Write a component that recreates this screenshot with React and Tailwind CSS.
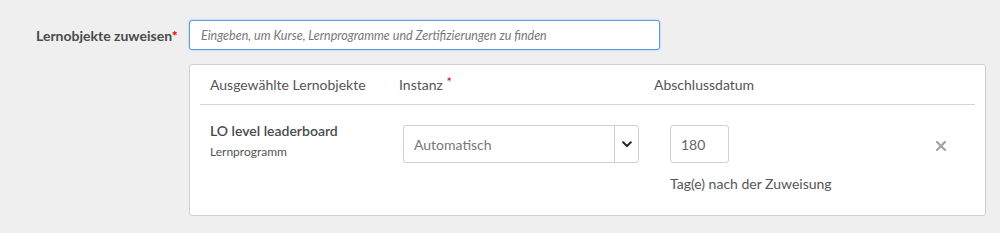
import React from 'react';

export default function App() {
  return (
    <div className="w-[1000px] h-[233px] bg-[#efefef] font-['Lato',sans-serif] text-[#555]">
      <div className="flex pl-[36px] pt-[20px]">
        {/* Label */}
        <div className="w-[153px] h-[30px] flex items-center">
          <span className="text-[14px] font-bold text-[#4a4a4a]">
            Lernobjekte zuweisen<span className="text-[#e00000]">*</span>
          </span>
        </div>

        <div className="flex flex-col">
          {/* Search input */}
          <input
            type="text"
            placeholder="Eingeben, um Kurse, Lernprogramme und Zertifizierungen zu finden"
            className="w-[471px] h-[30px] rounded-[3px] border border-[#5d95ea] bg-white px-[11px] text-[12.5px] italic outline-none placeholder-[#777] shadow-[0_0_2px_rgba(93,149,234,0.6)]"
          />

          {/* Selected objects panel */}
          <div className="mt-[14px] w-[797px] h-[152px] rounded-[3px] border border-[#cfcfcf] bg-white">
            {/* Header */}
            <div className="mx-[10px] flex h-[40px] items-center border-b border-[#d4d4d4] px-[10px] text-[14px] text-[#555]">
              <div className="w-[189px]">Ausgewählte Lernobjekte</div>
              <div className="w-[255px]">
                Instanz <span className="relative -top-[3px] text-[13px] text-[#e00000]">*</span>
              </div>
              <div>Abschlussdatum</div>
            </div>

            {/* Row */}
            <div className="flex pl-[20px]">
              <div className="w-[193px] pt-[16px]">
                <div className="text-[14px] leading-[20px] font-semibold text-[#4a4a4a]">LO level leaderboard</div>
                <div className="mt-[3px] text-[12px] leading-[16px] text-[#555]">Lernprogramm</div>
              </div>

              <div className="pt-[20px]">
                <div className="flex h-[38px] w-[236px] rounded-[3px] border border-[#d0d0d0]">
                  <div className="flex flex-1 items-center pl-[10px] text-[14px] text-[#777]">Automatisch</div>
                  <div className="flex w-[24px] items-center justify-center border-l border-[#d0d0d0]">
                    <svg width="10" height="7" viewBox="0 0 10 7" fill="none">
                      <path d="M1.2 1.3 5 5.1 8.8 1.3" stroke="#222" strokeWidth="2" strokeLinecap="round" strokeLinejoin="round" />
                    </svg>
                  </div>
                </div>
              </div>

              <div className="ml-[31px] pt-[20px]">
                <div className="flex h-[38px] w-[59px] items-center rounded-[3px] border border-[#d0d0d0] pl-[10px] text-[14px] text-[#666]">
                  180
                </div>
                <div className="mt-[11px] text-[14px] leading-[20px] text-[#555]">Tag(e) nach der Zuweisung</div>
              </div>

              <div className="ml-auto mr-[39px] pt-[36px]">
                <svg width="10" height="10" viewBox="0 0 10 10">
                  <path d="M1 1 9 9M9 1 1 9" stroke="#a3a3a3" strokeWidth="2.2" strokeLinecap="square" />
                </svg>
              </div>
            </div>
          </div>
        </div>
      </div>
    </div>
  );
}
